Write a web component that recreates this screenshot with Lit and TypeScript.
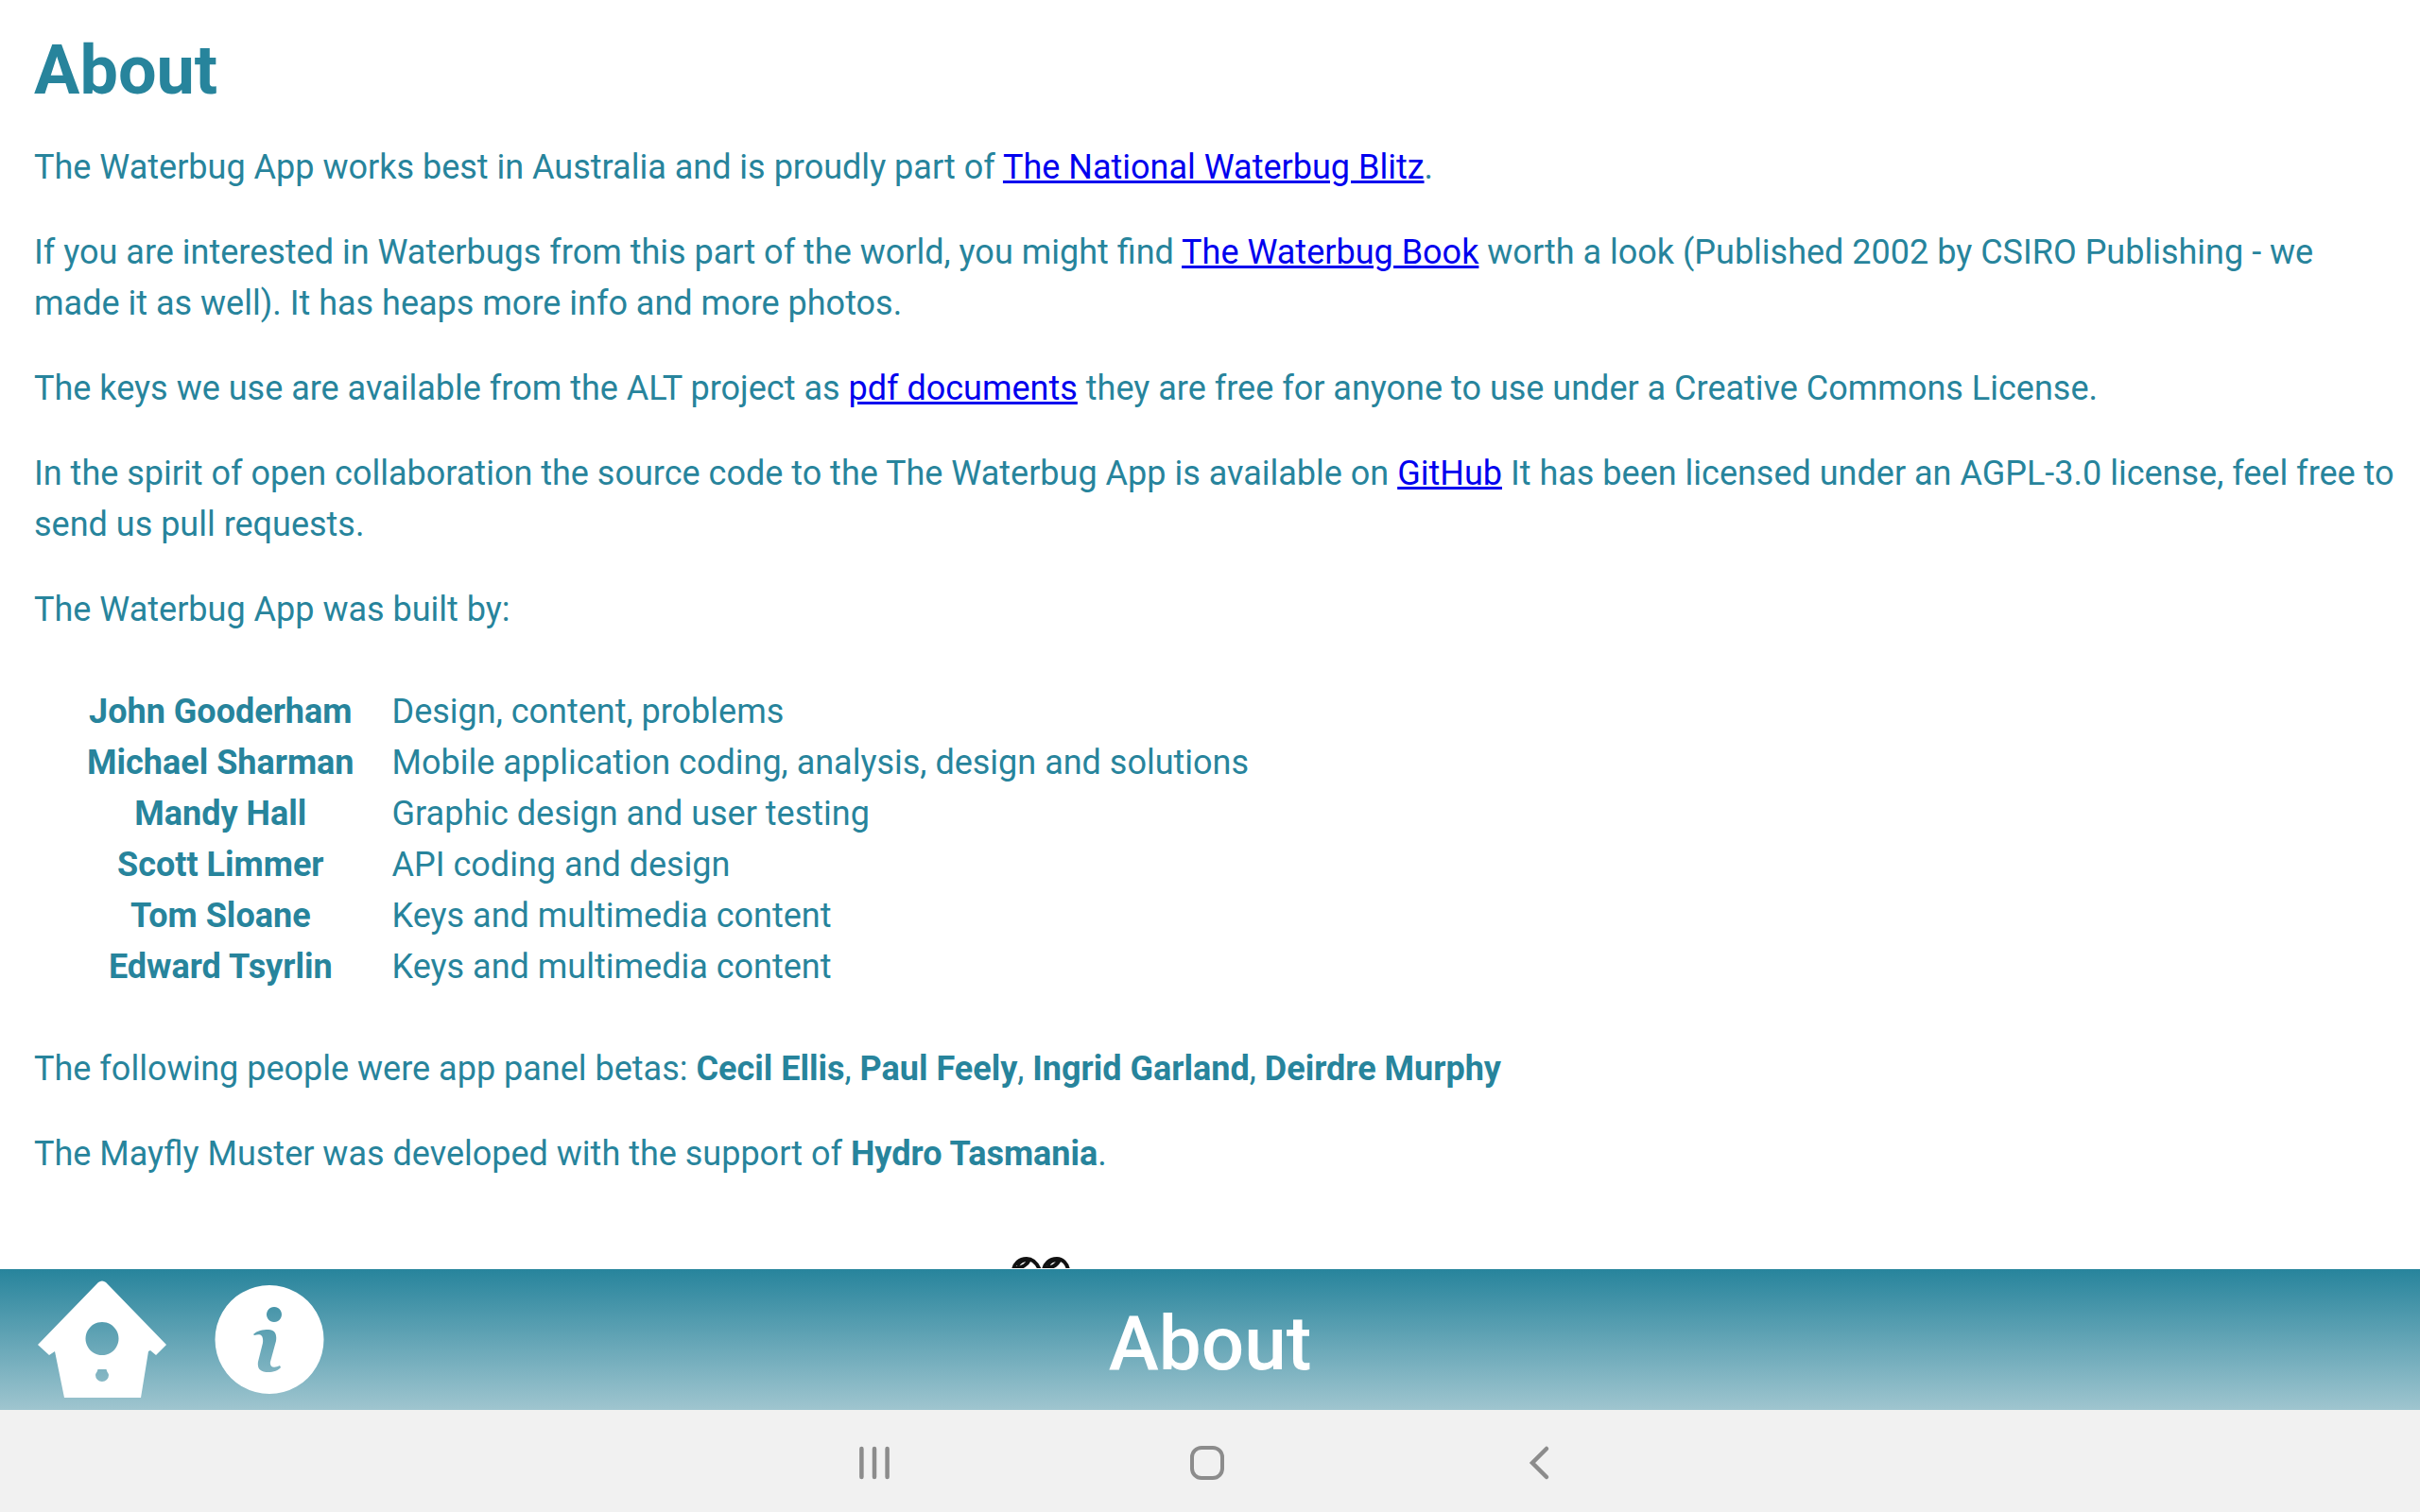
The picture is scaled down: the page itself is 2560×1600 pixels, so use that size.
import { LitElement, html, css } from "lit";
import { customElement } from "lit/decorators.js";

const BUILDERS: [string, string][] = [
  ["John Gooderham", "Design, content, problems"],
  ["Michael Sharman", "Mobile application coding, analysis, design and solutions"],
  ["Mandy Hall", "Graphic design and user testing"],
  ["Scott Limmer", "API coding and design"],
  ["Tom Sloane", "Keys and multimedia content"],
  ["Edward Tsyrlin", "Keys and multimedia content"],
];

@customElement("about-content")
class AboutContent extends LitElement {
  static styles = css`
    :host { display: block; box-sizing: border-box; padding: 36px 24px 0 36px; }
    .title { margin: 0; font-size: 72px; line-height: 78px; font-weight: 700; }
    .text { margin: 36px 0 0; }
    .link { color: #0000ee; text-decoration: underline; }
    .builders { margin: 54px 0 54px 36px; border-collapse: collapse; }
    .name, .role { padding: 0 20px; }
    .name { font-weight: 700; text-align: center; }
    .logo { display: block; width: 464px; height: 200px; margin: 72px auto 0; }
  `;
  render() {
    return html`
      <h1 class="title">About</h1>
      <p class="text">The Waterbug App works best in Australia and is proudly part of <a class="link" href="#blitz">The National Waterbug Blitz</a>.</p>
      <p class="text">If you are interested in Waterbugs from this part of the world, you might find <a class="link" href="#book">The Waterbug Book</a> worth a look (Published 2002 by CSIRO Publishing - we made it as well). It has heaps more info and more photos.</p>
      <p class="text">The keys we use are available from the ALT project as <a class="link" href="#keys">pdf documents</a> they are free for anyone to use under a Creative Commons License.</p>
      <p class="text">In the spirit of open collaboration the source code to the The Waterbug App is available on <a class="link" href="#github">GitHub</a> It has been licensed under an AGPL-3.0 license, feel free to send us pull requests.</p>
      <p class="text">The Waterbug App was built by:</p>
      <table class="builders">
        <tbody>
          ${BUILDERS.map(([name, role]) => html`<tr><th class="name" scope="row">${name}</th><td class="role">${role}</td></tr>`)}
        </tbody>
      </table>
      <p class="text">The following people were app panel betas: <b>Cecil Ellis</b>, <b>Paul Feely</b>, <b>Ingrid Garland</b>, <b>Deirdre Murphy</b></p>
      <p class="text">The Mayfly Muster was developed with the support of <b>Hydro Tasmania</b>.</p>
      <svg class="logo" viewBox="0 0 464 200" aria-hidden="true" fill="none" stroke="#111" stroke-width="4" stroke-linecap="round">
        <path d="M18 24C19 17 24 12 32 12C38 12 43 17 46 24M20 22C27 22 33 18 35 13M23 18C26 14 29 13 33 13"/>
        <path d="M50 24C51 17 56 12 64 12C70 12 75 17 76 24M51 22C59 22 64 19 67 13M55 18C57 14 61 13 66 13"/>
      </svg>
    `;
  }
}

@customElement("app-root")
class AppRoot extends LitElement {
  static styles = css`
    :host {
      display: flex; flex-direction: column; height: 100vh; background: #fff;
      color: #27849c; font-family: Roboto, sans-serif; font-size: 36px; line-height: 54px;
    }
    .page { flex: 1; min-height: 0; overflow: hidden; }
    .bar {
      display: grid; grid-template-columns: 1fr auto 1fr; align-items: center;
      height: 149px; margin-top: 1px; padding: 0 36px;
      background: linear-gradient(#27849c, #9fc5cf);
    }
    .actions { display: flex; align-items: center; gap: 47px; }
    .button { display: block; padding: 0; border: 0; background: none; color: inherit; }
    .icon { display: block; }
    .heading { margin: 0; padding-top: 8px; color: #fff; font-size: 80px; line-height: 96px; font-weight: 500; }
    .system {
      display: flex; justify-content: center; align-items: center; gap: 304px;
      box-sizing: border-box; height: 108px; padding: 4px 6px 0 0; background: #f1f1f1; color: #8c8c8c;
    }
  `;
  render() {
    return html`
      <main class="page"><about-content></about-content></main>
      <header class="bar">
        <div class="actions">
          <button class="button" aria-label="Home">
            <svg class="icon" width="144" height="132" viewBox="36 1352 144 132" fill="#fff">
              <path fill-rule="evenodd" d="M104 1357Q108 1354 112 1357L176 1423L165 1434L159 1429L157 1430L149 1479H68L58 1430L52 1434L40 1423ZM108 1399a17.500 17.500 0 1 0 .01 0ZM103.500 1449H112.500C113 1452 115 1453 115 1455A7 7 0 0 1 101 1455C101 1453 103 1452 103.500 1449Z"/>
            </svg>
          </button>
          <button class="button" aria-label="Information">
            <svg class="icon" width="116" height="116" viewBox="227 1360 116 116">
              <path fill="#fff" fill-rule="evenodd" d="M285 1360a57.500 57.500 0 1 0 .01 0ZM290 1383a8 8 0 1 1-.01 0ZM268 1412C272 1408 278 1407 284 1407C291 1407 293 1412 292 1419L286 1441C285 1447 290 1448 296 1445L297 1447C295 1450 289 1452 284 1452C275 1452 272 1448 273 1441L278 1421C279 1412 275 1411 269 1413Z"/>
            </svg>
          </button>
        </div>
        <h2 class="heading">About</h2>
      </header>
      <nav class="system" aria-label="System">
        <button class="button" aria-label="Recent apps">
          <svg class="icon" width="48" height="48" viewBox="0 0 48 48" fill="none" stroke="currentColor" stroke-width="4.500" stroke-linecap="round"><path d="M10.400 9V39M24 9V39M37.600 9V39"/></svg>
        </button>
        <button class="button" aria-label="Home screen">
          <svg class="icon" width="48" height="48" viewBox="0 0 48 48" fill="none" stroke="currentColor" stroke-width="4"><rect x="8" y="8" width="32" height="32" rx="10"/></svg>
        </button>
        <button class="button" aria-label="Back">
          <svg class="icon" width="48" height="48" viewBox="0 0 48 48" fill="none" stroke="currentColor" stroke-width="4.500" stroke-linecap="round"><path d="M31 9L16 24L31 39"/></svg>
        </button>
      </nav>
    `;
  }
}
